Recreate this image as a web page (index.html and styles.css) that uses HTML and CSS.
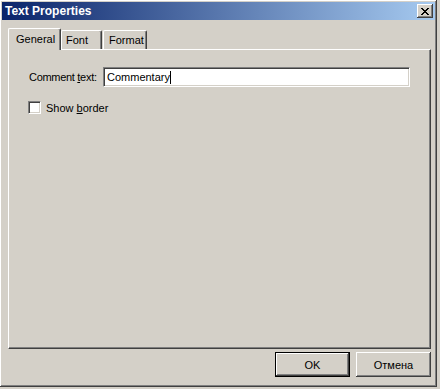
FILE: index.html
```html
<!DOCTYPE html>
<html lang="en">
<head>
    <meta charset="UTF-8">
    <title>Text Properties</title>
    <link rel="stylesheet" href="styles.css">
</head>
<body>

<div class="window">
    <div class="titlebar">
        <span class="title">Text Properties</span>
        <button class="close-btn" aria-label="Close">
            <svg width="8" height="7" viewBox="0 0 8 7">
                <path d="M0 0h2v1h-2zM6 0h2v1h-2zM1 1h2v1h-2zM5 1h2v1h-2zM2 2h4v1h-4zM3 3h2v1h-2zM2 4h4v1h-4zM1 5h2v1h-2zM5 5h2v1h-2zM0 6h2v1h-2zM6 6h2v1h-2z" fill="#000"/>
            </svg>
        </button>
    </div>

    <div class="content">
        <div class="tabs">
            <div class="tab active tab-general">General</div>
            <div class="tab tab-font">Font</div>
            <div class="tab tab-format">Format</div>
        </div>

        <div class="panel">
            <div class="row">
                <label class="label">Comment <u>t</u>ext:</label>
                <div class="textbox">Commentary<span class="caret"></span></div>
            </div>
            <div class="check-row">
                <span class="checkbox"></span>
                <span>Show <u>b</u>order</span>
            </div>
        </div>

        <div class="buttons">
            <button class="btn default">OK</button>
            <button class="btn">Отмена</button>
        </div>
    </div>
</div>

</body>
</html>
```

FILE: styles.css
```css
body {
    margin: 0;
    background-color: #d4d0c8;
    font-family: "Liberation Sans", Arial, sans-serif;
    font-size: 11px;
    color: #000;
}

.window {
    width: 437px;
    height: 387px;
    box-sizing: border-box;
    padding: 2px;
    background-color: #d4d0c8;
    box-shadow: inset -1px -1px #404040, inset 1px 1px #fff, inset -2px -2px #808080;
    display: flex;
    flex-direction: column;
}

.titlebar {
    height: 18px;
    background: linear-gradient(to right, #0a246a, #a6caf0);
    display: flex;
    justify-content: space-between;
    align-items: center;
    padding: 0 2px 0 3px;
}

.title {
    color: #fff;
    font-weight: bold;
    font-size: 12px;
}

.close-btn {
    width: 16px;
    height: 14px;
    padding: 0;
    border: none;
    background-color: #d4d0c8;
    box-shadow: inset -1px -1px #404040, inset 1px 1px #fff, inset -2px -2px #808080;
    display: flex;
    align-items: center;
    justify-content: center;
}

.content {
    flex: 1;
    display: flex;
    flex-direction: column;
    padding: 8px 4px 0 6px;
}

.tabs {
    display: flex;
    align-items: flex-end;
    height: 21px;
    position: relative;
    z-index: 1;
}

.tab {
    height: 19px;
    box-sizing: border-box;
    padding: 3px 0 0 5px;
    border-top: 1px solid #fff;
    border-left: 1px solid #fff;
    border-right: 1px solid #404040;
    box-shadow: inset -1px 0 #808080;
    border-radius: 2px 2px 0 0;
    background-color: #d4d0c8;
}

.tab.active {
    height: 22px;
    margin-bottom: -1px;
    padding: 4px 0 0 7px;
}

.tab-general {
    width: 53px;
}

.tab-font {
    width: 41px;
    padding-left: 4px;
}

.tab-format {
    width: 44px;
    margin-left: 1px;
}

.panel {
    height: 300px;
    box-sizing: border-box;
    border-top: 1px solid #fff;
    border-left: 1px solid #fff;
    border-right: 1px solid #404040;
    border-bottom: 1px solid #404040;
    box-shadow: inset -1px -1px #808080;
    padding: 17px 20px 0 20px;
}

.row {
    display: flex;
    align-items: center;
}

.label {
    width: 74px;
    flex-shrink: 0;
    white-space: nowrap;
    letter-spacing: -0.3px;
}

.textbox {
    flex: 1;
    height: 20px;
    box-sizing: border-box;
    background-color: #fff;
    border-top: 1px solid #808080;
    border-left: 1px solid #808080;
    border-right: 1px solid #fff;
    border-bottom: 1px solid #fff;
    box-shadow: inset 1px 1px #404040, inset -1px -1px #d4d0c8;
    padding: 3px 3px 0 3px;
    line-height: 13px;
}

.caret {
    display: inline-block;
    width: 1px;
    height: 13px;
    background-color: #000;
    vertical-align: top;
}

.check-row {
    display: flex;
    align-items: center;
    gap: 5px;
    margin-top: 14px;
    margin-left: -1px;
}

.checkbox {
    width: 13px;
    height: 13px;
    box-sizing: border-box;
    background-color: #fff;
    border-top: 1px solid #808080;
    border-left: 1px solid #808080;
    border-right: 1px solid #fff;
    border-bottom: 1px solid #fff;
    box-shadow: inset 1px 1px #404040, inset -1px -1px #d4d0c8;
}

.buttons {
    display: flex;
    justify-content: flex-end;
    gap: 6px;
    margin-top: 3px;
}

.btn {
    width: 75px;
    height: 25px;
    font-family: "Liberation Sans", Arial, sans-serif;
    font-size: 11px;
    color: #000;
    background-color: #d4d0c8;
    border: none;
    padding: 0;
    box-shadow: inset -1px -1px #404040, inset 1px 1px #fff, inset -2px -2px #808080;
}

.btn.default {
    border: 1px solid #000;
}
```
